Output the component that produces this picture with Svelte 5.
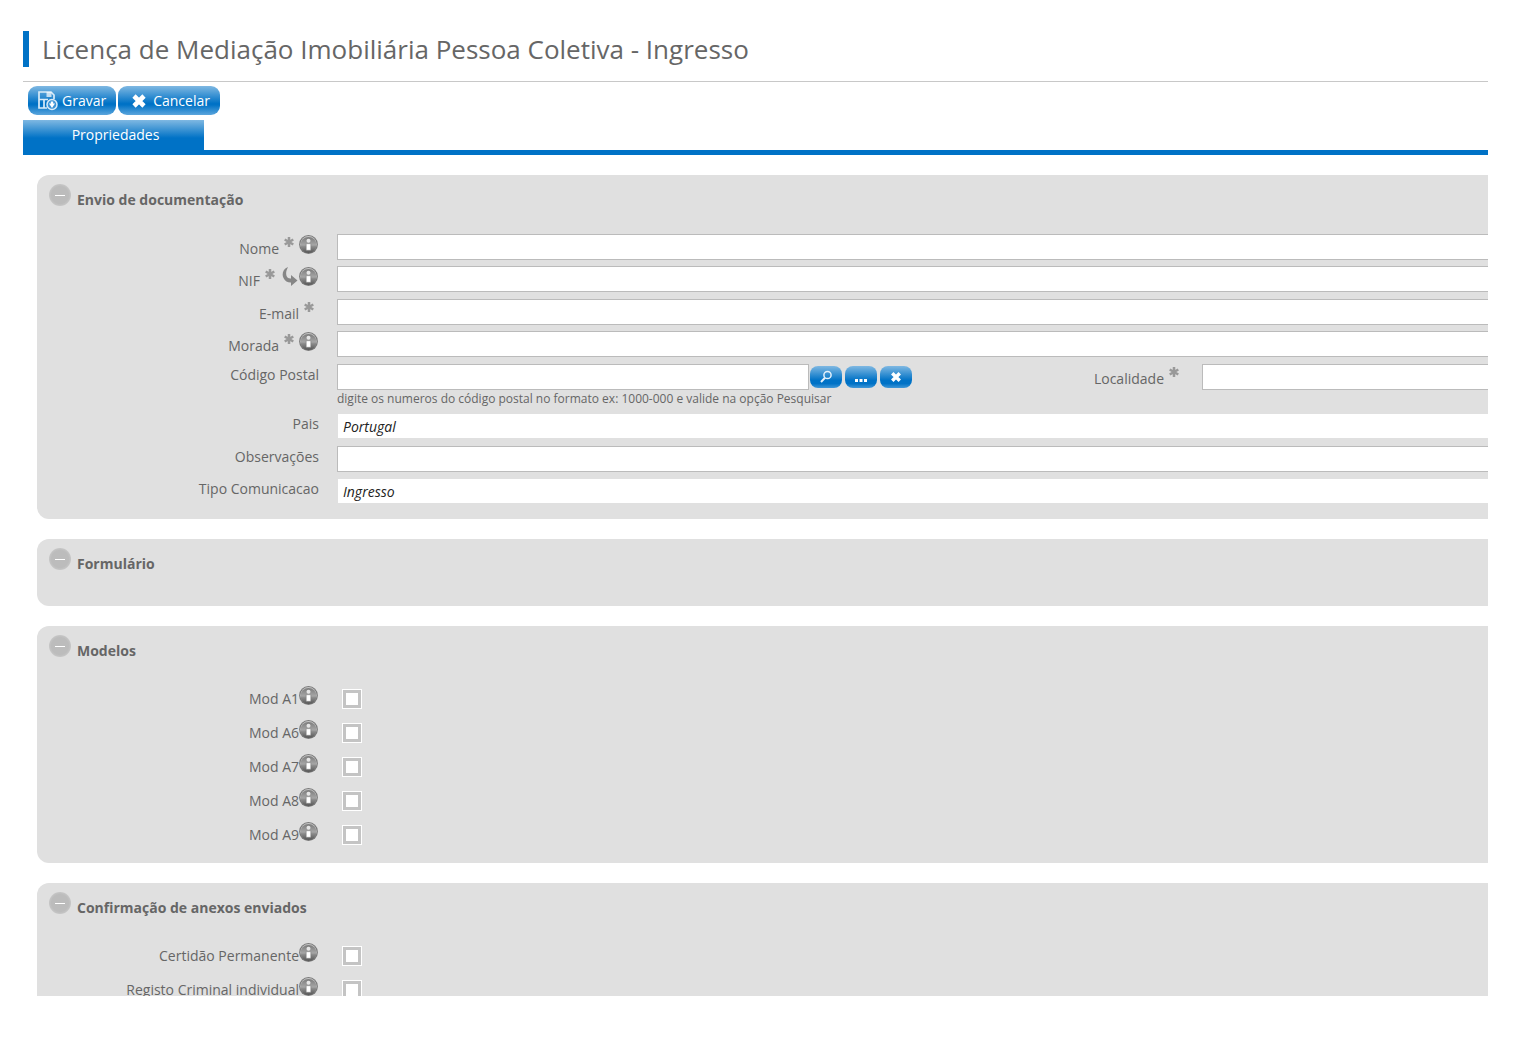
<script>
  let collapsed = $state({});

  let fields = $state([
    { id: "nome", label: "Nome", required: true, info: true, value: "" },
    { id: "nif", label: "NIF", required: true, reload: true, info: true, value: "" },
    { id: "email", label: "E-mail", required: true, value: "" },
    { id: "morada", label: "Morada", required: true, info: true, value: "" },
    { id: "postal", label: "Código Postal", lookup: true, value: "" },
    { id: "pais", label: "Pais", readonly: true, value: "Portugal" },
    { id: "obs", label: "Observações", value: "" },
    { id: "tipo", label: "Tipo Comunicacao", readonly: true, value: "Ingresso" },
  ]);
  let localidade = $state("");

  const models = ["Mod A1", "Mod A6", "Mod A7", "Mod A8", "Mod A9"];
  const attachments = ["Certidão Permanente", "Registo Criminal individual"];

  function toggle(name) {
    collapsed[name] = !collapsed[name];
  }
</script>

{#snippet infoIcon()}
  <svg class="info" viewBox="0 0 20 20" aria-hidden="true">
    <defs>
      <linearGradient id="infoFill" x1="0" y1="0" x2="0" y2="1">
        <stop offset="0" stop-color="#7c7c7c" />
        <stop offset="0.5" stop-color="#a6a6a6" />
        <stop offset="0.6" stop-color="#8c8c8c" />
        <stop offset="1" stop-color="#555" />
      </linearGradient>
    </defs>
    <circle cx="9.5" cy="9.5" r="9.4" fill="#7a7a7a" />
    <circle cx="9.5" cy="9.3" r="8.2" fill="#c4c4c4" />
    <circle cx="9.5" cy="10" r="8" fill="url(#infoFill)" />
    <circle cx="9.5" cy="5.8" r="2" fill="#e6e6e6" />
    <path d="M7.2 8.7h4.6v6.600H7.200z" fill="#fff" stroke="#777" stroke-width="0.5" />
  </svg>
{/snippet}

{#snippet star()}
  <svg class="star" viewBox="0 0 10 10" aria-hidden="true">
    <path d="M5 0v10M0.7 2.5l8.6 5M9.3 2.5l-8.6 5" stroke="#999" stroke-width="2.5" />
  </svg>
{/snippet}

{#snippet cross()}
  <path d="M3 3l10 10M13 3L3 13" stroke="#fff" stroke-width="4.6" />
{/snippet}

{#snippet heading(name)}
  <h2>
    <button class="toggle" aria-label={name} aria-expanded={!collapsed[name]} onclick={() => toggle(name)}></button>
    {name}
  </h2>
{/snippet}

{#snippet checks(items)}
  {#each items as item}
    <div class="check-row">
      <label for={item}>{item}{@render infoIcon()}</label>
      <input type="checkbox" id={item} />
    </div>
  {/each}
{/snippet}

<main>
  <h1>Licença de Mediação Imobiliária Pessoa Coletiva - Ingresso</h1>

  <div class="toolbar">
    <button class="action">
      <svg width="20" height="20" viewBox="0 0 20 20" fill="none" stroke="#d9ebf8" aria-hidden="true">
        <path d="M9 17H1V1h12l3 3v4M1 8.5h9M6 8.5V17" stroke-width="1.7" />
        <path d="M8.500 1h5v5h-5z" fill="#fff" fill-opacity="0.7" stroke="none" />
        <circle cx="14" cy="13.5" r="5" fill="#3c93d6" stroke-width="1.5" />
        <path d="M11 12.500h6L14 17z" fill="#fff" stroke="none" />
        <path d="M14 10.5v3" stroke="#fff" stroke-width="2.4" />
      </svg>
      Gravar
    </button>
    <button class="action cancel">
      <svg width="16" height="16" viewBox="0 0 16 16" aria-hidden="true">{@render cross()}</svg>
      Cancelar
    </button>
  </div>

  <nav>
    <button class="tab">Propriedades</button>
  </nav>

  <section>
    {@render heading("Envio de documentação")}
    {#if !collapsed["Envio de documentação"]}
      {#each fields as field}
        <div class="row">
          <label for={field.id} class:marked={field.required}>
            {field.label}
            {#if field.required}{@render star()}{/if}
            {#if field.reload}
              <svg class="reload" viewBox="0 0 16 20" aria-hidden="true">
                <path d="M6 0C1 2 -0.500 7 1.500 11c1.500 3.300 4.500 4.800 7.500 4.600V19l6.500-5.500L9 8v3.500c-2.500.2-4-.8-4.600-3C3.700 5.500 4.500 3 6 0z" fill="#868686" />
              </svg>
            {/if}
            {#if field.info}{@render infoIcon()}{/if}
          </label>
          {#if field.lookup}
            <div class="postal">
              <input type="text" id={field.id} bind:value={field.value} />
              <div class="between">
                <button class="mini" aria-label="Pesquisar">
                  <svg width="14" height="14" viewBox="0 0 14 14" fill="none" stroke="#e4f1fb" aria-hidden="true">
                    <circle cx="8.500" cy="5" r="3.600" stroke-width="1.500" />
                    <path d="M6 7.800L2 12" stroke-width="2" />
                  </svg>
                </button>
                <button class="mini" aria-label="Mais opções">
                  <svg width="14" height="14" viewBox="0 0 14 14" fill="#fff" aria-hidden="true">
                    <path d="M1 9h3v3H1zM5.500 9h3v3h-3zM10 9h3v3h-3z" />
                  </svg>
                </button>
                <button class="mini" aria-label="Limpar">
                  <svg width="12" height="12" viewBox="0 0 16 16" aria-hidden="true">{@render cross()}</svg>
                </button>
                <label for="localidade" class="marked">Localidade {@render star()}</label>
              </div>
              <input type="text" id="localidade" bind:value={localidade} />
              <small>digite os numeros do código postal no formato ex: 1000-000 e valide na opção Pesquisar</small>
            </div>
          {:else}
            <input type="text" id={field.id} readonly={field.readonly} bind:value={field.value} />
          {/if}
        </div>
      {/each}
    {/if}
  </section>

  <section>
    {@render heading("Formulário")}
  </section>

  <section>
    {@render heading("Modelos")}
    {#if !collapsed["Modelos"]}
      {@render checks(models)}
    {/if}
  </section>

  <section>
    {@render heading("Confirmação de anexos enviados")}
    {#if !collapsed["Confirmação de anexos enviados"]}
      {@render checks(attachments)}
    {/if}
  </section>
</main>

<style>
  :global(body) {
    background: #fff;
  }
  main {
    box-sizing: border-box;
    height: calc(100vh - 42px);
    margin: 0 32px 0 23px;
    padding-top: 31px;
    overflow: hidden;
    color: #666;
    font: 14px/22px "Open Sans", "Noto Sans", sans-serif;
  }
  button,
  input {
    box-sizing: border-box;
    font: inherit;
  }
  button {
    padding: 0;
    border: 0;
    color: #fff;
    cursor: pointer;
  }
  h1 {
    margin: 0;
    padding-left: 13px;
    border-left: 6px solid #0072c6;
    font-size: 26px;
    font-weight: 400;
    line-height: 36px;
  }
  .toolbar {
    display: flex;
    gap: 2px;
    margin-top: 14px;
    padding: 4px 5px;
    border-top: 1px solid #c8c8c8;
  }
  .action {
    display: flex;
    align-items: center;
    gap: 4px;
    height: 29px;
    padding: 0 10px;
    border-radius: 9px;
    background: linear-gradient(#7fb8e2, #0072c6 60%, #0072c6 65%, #5ba5dc);
  }
  .cancel {
    gap: 6px;
    padding-left: 13px;
  }
  nav {
    margin-top: 1px;
    border-bottom: 5px solid #0072c6;
  }
  .tab {
    display: block;
    width: 181px;
    height: 30px;
    padding-left: 4px;
    background: linear-gradient(#7fb8e2, #0072c6 60%);
  }
  section {
    margin: 20px 0 0 14px;
    padding-bottom: 8px;
    border-radius: 12px 0 0 12px;
    background: #e0e0e0;
  }
  h2 {
    display: flex;
    gap: 6px;
    height: 50px;
    margin: 0;
    padding: 9px 0 0 12px;
    font-size: 14px;
    line-height: 31px;
  }
  .toggle {
    display: flex;
    align-items: center;
    justify-content: center;
    width: 22px;
    height: 22px;
    border-radius: 50%;
    background: radial-gradient(#bcbcbc 55%, #c6c6c6 70%);
  }
  .toggle::before {
    content: "";
    width: 10px;
    height: 1px;
    background: #fff;
  }
  .row,
  .check-row {
    display: flex;
    align-items: flex-start;
  }
  .row {
    margin-bottom: 6px;
  }
  .row:nth-of-type(even) {
    margin-bottom: 7px;
  }
  label {
    display: flex;
    justify-content: flex-end;
    height: 26px;
  }
  .row > label,
  .check-row > label {
    flex: none;
    width: 282px;
    margin-right: 18px;
  }
  label.marked {
    line-height: 30px;
  }
  .star {
    width: 10px;
    height: 10px;
    margin: 3px 5px 0;
  }
  .reload {
    width: 16px;
    height: 20px;
    margin: 1px 1px 0 2px;
  }
  .info {
    width: 20px;
    height: 20px;
    margin-top: 1px;
  }
  input[type="text"] {
    flex: 1;
    min-width: 0;
    height: 26px;
    padding: 0 5px;
    border: 1px solid #bbb;
    border-right: 0;
    background: #fff;
    color: #222;
  }
  input[type="text"]:read-only {
    border-color: #e0e0e0;
    font-style: italic;
  }
  .postal {
    flex: 1;
    display: grid;
    grid-template-columns: 472fr 393fr 286fr;
  }
  .postal #postal {
    border-right: 1px solid #bbb;
  }
  .between {
    display: flex;
    align-items: flex-start;
    gap: 3px;
    padding: 0 18px 0 1px;
  }
  .between label {
    margin-left: auto;
  }
  .mini {
    display: flex;
    align-items: center;
    justify-content: center;
    width: 32px;
    height: 22px;
    margin-top: 2px;
    border-radius: 8px;
    background: linear-gradient(#7fb8e2, #0072c6 65%, #0072c6 80%, #3f97d8);
  }
  small {
    grid-column: 1 / -1;
    font-size: 12px;
    line-height: 17px;
  }
  .check-row {
    height: 34px;
  }
  .check-row label {
    line-height: 28px;
  }
  input[type="checkbox"] {
    appearance: none;
    width: 20px;
    height: 20px;
    margin: 4px 5px;
    border: 1px solid #fff;
    background: #fff;
    box-shadow: inset 0 0 0 3px #c4c4c4;
  }
</style>
